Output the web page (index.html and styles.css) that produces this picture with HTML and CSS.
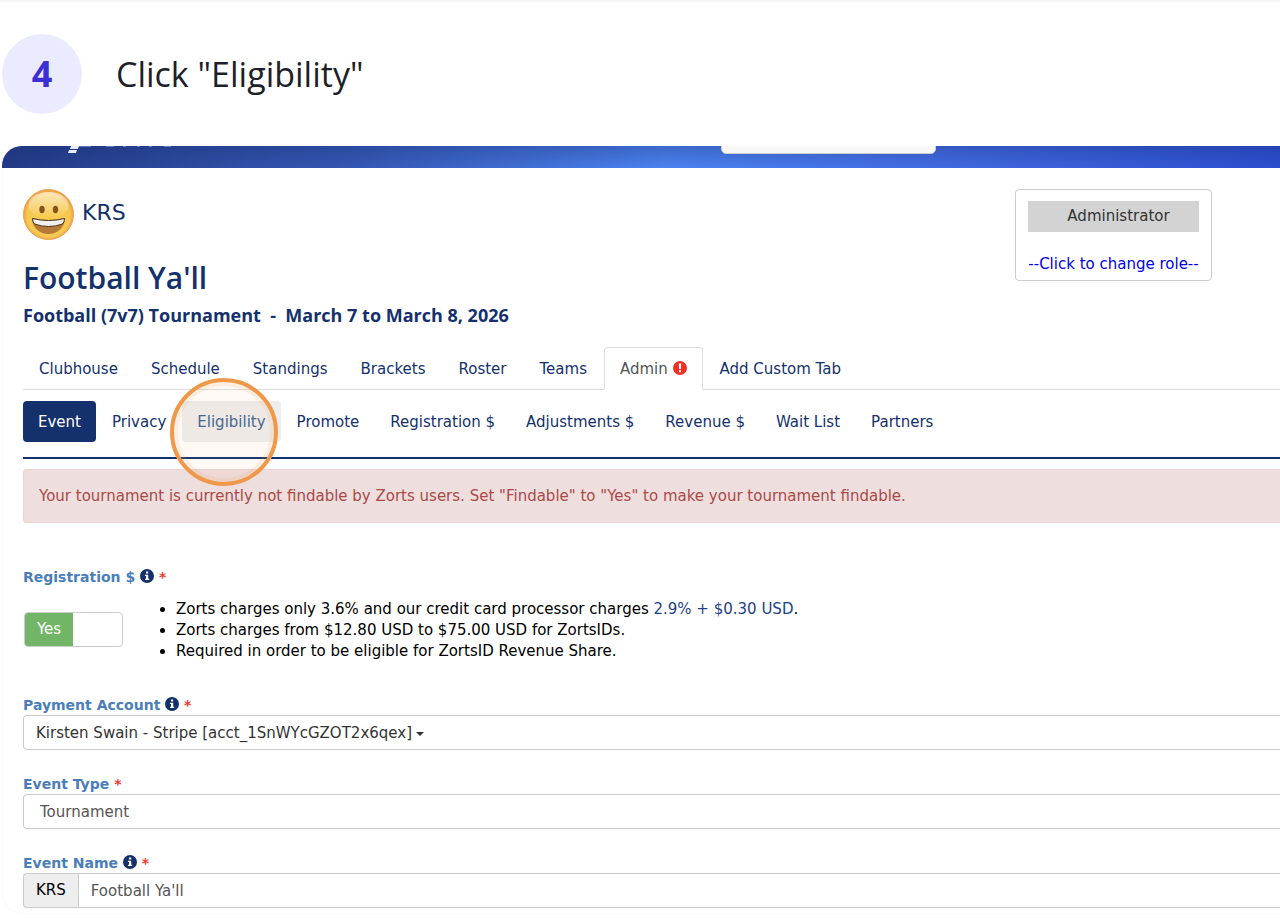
FILE: index.html
```html
<!DOCTYPE html>
<html lang="en">
<head>
    <meta charset="UTF-8">
    <meta name="viewport" content="width=device-width, initial-scale=1.0">
    <title>Click "Eligibility"</title>
    <link rel="stylesheet" href="styles.css">
</head>
<body>
    <!-- Step heading -->
    <header class="step">
        <span class="step-number">4</span>
        <h1 class="step-title">Click "Eligibility"</h1>
    </header>

    <main class="shot">
        <!-- Site bar, scrolled mostly out of view -->
        <div class="site-bar">
            <svg class="logo" width="110" height="8" viewBox="0 0 110 8" aria-hidden="true">
                <path d="M4 0H12L11 3H3ZM2 4H10L9 7H1Z" fill="#e8ecf6"/>
                <path d="M12 0H24M39 0H47M56 0H59M70 0H73M82 0H85M97 0H104" stroke="#a9b4d2" stroke-width="1"/>
            </svg>
            <input class="site-search" type="text" aria-label="Search">
        </div>

        <div class="page">
            <div class="top">
                <div class="club">
                    <svg class="avatar" viewBox="0 0 51 51" aria-hidden="true">
                        <defs>
                            <radialGradient id="face" cx="50%" cy="52%" r="50%">
                                <stop offset="0" stop-color="#f8cb4b"/>
                                <stop offset="0.85" stop-color="#f7c852"/>
                                <stop offset="1" stop-color="#eda044"/>
                            </radialGradient>
                            <linearGradient id="shine" x1="0" y1="0" x2="0" y2="1">
                                <stop offset="0" stop-color="#fff" stop-opacity="0.6"/>
                                <stop offset="1" stop-color="#fff" stop-opacity="0"/>
                            </linearGradient>
                        </defs>
                        <circle cx="25.5" cy="25.5" r="25" fill="url(#face)" stroke="#eda050"/>
                        <ellipse cx="25.5" cy="16" rx="20" ry="13" fill="url(#shine)"/>
                        <ellipse cx="19" cy="20.5" rx="2.7" ry="3.8" fill="#84531d"/>
                        <ellipse cx="32.5" cy="20.5" rx="2.7" ry="3.8" fill="#84531d"/>
                        <path d="M9 29Q25.5 33 42 29C42 39 34 45 25.5 45S9 39 9 29Z" fill="#b57b36"/>
                        <path d="M9.5 29.5Q25.5 33.5 41.5 29.5Q41.5 33 39.5 35Q25.5 40 11.5 35Q9.5 33 9.5 29.5Z" fill="#f0f0ee" stroke="#4f331a"/>
                    </svg>
                    <a class="club-name" href="#">KRS</a>
                </div>
                <div class="role">
                    <div class="role-name">Administrator</div>
                    <a class="role-change" href="#">--Click to change role--</a>
                </div>
            </div>

            <h2 class="event-title">Football Ya'll</h2>
            <h3 class="event-info">Football (7v7) Tournament &nbsp;-&nbsp; March 7 to March 8, 2026</h3>

            <nav class="tabs">
                <a href="#">Clubhouse</a>
                <a href="#">Schedule</a>
                <a href="#">Standings</a>
                <a href="#">Brackets</a>
                <a href="#">Roster</a>
                <a href="#">Teams</a>
                <a class="active" href="#">Admin
                    <svg class="icon" viewBox="0 0 14 14" aria-hidden="true"><circle cx="7" cy="7" r="7" fill="#ee3124"/><path d="M5.8 2.5H8.2L7.9 8H6.1ZM6 9.2H8V11.3H6Z" fill="#fff"/></svg>
                </a>
                <a href="#">Add Custom Tab</a>
            </nav>

            <nav class="pills">
                <a class="active" href="#">Event</a>
                <a href="#">Privacy</a>
                <a class="hover" href="#">Eligibility<span class="click-ring"></span></a>
                <a href="#">Promote</a>
                <a href="#">Registration $</a>
                <a href="#">Adjustments $</a>
                <a href="#">Revenue $</a>
                <a href="#">Wait List</a>
                <a href="#">Partners</a>
            </nav>

            <div class="alert">Your tournament is currently not findable by Zorts users. Set "Findable" to "Yes" to make your tournament findable.</div>

            <form class="event-form">
                <div class="field">
                    <label class="label" for="registration">Registration $
                        <svg class="icon" viewBox="0 0 14 14" aria-hidden="true"><circle cx="7" cy="7" r="7" fill="#14316d"/><path d="M6 2.5H8.2V4.5H6ZM5 5.7H8.2V9.7H9.2V11H5V9.7H6V7H5Z" fill="#fff"/></svg>
                        <span class="required">*</span>
                    </label>
                    <div class="registration">
                        <div class="switch">
                            <input type="checkbox" id="registration" checked>
                            <span class="switch-on">Yes</span>
                        </div>
                        <ul class="fees">
                            <li>Zorts charges only 3.6% and our credit card processor charges <a href="#">2.9% + $0.30 USD</a>.</li>
                            <li>Zorts charges from $12.80 USD to $75.00 USD for ZortsIDs.</li>
                            <li>Required in order to be eligible for ZortsID Revenue Share.</li>
                        </ul>
                    </div>
                </div>

                <div class="field">
                    <label class="label" for="account">Payment Account
                        <svg class="icon" viewBox="0 0 14 14" aria-hidden="true"><circle cx="7" cy="7" r="7" fill="#14316d"/><path d="M6 2.5H8.2V4.5H6ZM5 5.7H8.2V9.7H9.2V11H5V9.7H6V7H5Z" fill="#fff"/></svg>
                        <span class="required">*</span>
                    </label>
                    <button class="control account" id="account" type="button">Kirsten Swain - Stripe [acct_1SnWYcGZOT2x6qex]<span class="caret"></span></button>
                </div>

                <div class="field">
                    <label class="label" for="type">Event Type
                        <span class="required">*</span>
                    </label>
                    <select class="control type" id="type">
                        <option>Tournament</option>
                    </select>
                </div>

                <div class="field">
                    <label class="label" for="name">Event Name
                        <svg class="icon" viewBox="0 0 14 14" aria-hidden="true"><circle cx="7" cy="7" r="7" fill="#14316d"/><path d="M6 2.5H8.2V4.5H6ZM5 5.7H8.2V9.7H9.2V11H5V9.7H6V7H5Z" fill="#fff"/></svg>
                        <span class="required">*</span>
                    </label>
                    <div class="name-group">
                        <span class="addon">KRS</span>
                        <input class="control" id="name" type="text" value="Football Ya'll">
                    </div>
                </div>
            </form>
        </div>
    </main>
</body>
</html>
```
FILE: styles.css
```css
* {
    box-sizing: border-box;
}

body {
    margin: 0;
    border-top: 2px solid #f5f5f6;
    background-color: #fff;
    font-family: "DejaVu Sans", Verdana, sans-serif;
    font-size: 15px;
    line-height: 20px;
    color: #000;
}

a {
    color: #14316d;
    text-decoration: none;
}

/* Step heading */
.step {
    display: flex;
    align-items: center;
    gap: 34px;
    padding: 32px 2px;
}

.step-number {
    width: 80px;
    height: 80px;
    border-radius: 50%;
    background-color: #ebebff;
    color: #3c2fd3;
    font-family: "Open Sans", sans-serif;
    font-size: 36px;
    font-weight: bold;
    line-height: 80px;
    text-align: center;
}

.step-title {
    margin: 0;
    font-family: "Open Sans", sans-serif;
    font-size: 34px;
    font-weight: normal;
    line-height: 40px;
    color: #1e1f28;
}

/* Captured window */
.shot {
    margin-left: 2px;
    border-bottom: 1px solid #fafafa;
    border-radius: 20px 0 0 20px;
    box-shadow: inset 1px 0 #fafafa;
    overflow: hidden;
}

.site-bar {
    position: relative;
    height: 22px;
    background:
        linear-gradient(to top, rgba(20, 45, 110, 0), rgba(20, 45, 110, 0.3)),
        linear-gradient(to right, #243a86 0%, #3558b5 28%, #4c82f0 52%, #4169e1 75%, #2c4ed0 100%);
}

.logo {
    position: absolute;
    left: 65px;
    top: 0;
}

.site-search {
    position: absolute;
    left: 56.25%;
    bottom: 14px;
    width: 215px;
    height: 34px;
    border: 1px solid #ccc;
    border-radius: 5px;
    background-color: #f8f8f8;
}

.page {
    padding: 21px 0 5px 21px;
}

.top {
    display: flex;
    justify-content: space-between;
    align-items: flex-start;
    padding-right: 68px;
}

.club {
    display: flex;
    gap: 8px;
}

.avatar {
    width: 51px;
    height: 51px;
}

.club-name {
    font-size: 22px;
    line-height: 48px;
}

.role {
    width: 197px;
    height: 92px;
    padding: 11px 12px;
    border: 1px solid #ccc;
    border-radius: 4px;
    text-align: center;
    white-space: nowrap;
}

.role-name {
    padding-left: 10px;
    background-color: #d3d3d3;
    color: #333;
    line-height: 31px;
}

.role-change {
    display: block;
    margin-top: 22px;
    color: #00e;
}

.event-title,
.event-info {
    margin: 0;
    color: #14316d;
    font-family: "Open Sans", sans-serif;
}

.event-title {
    margin-top: -21px;
    font-size: 30px;
    font-weight: 600;
    line-height: 36px;
}

.event-info {
    margin-top: 8px;
    font-size: 18px;
    line-height: 22px;
}

/* Main tabs */
.tabs {
    display: flex;
    gap: 1px;
    margin-top: 21px;
    border-bottom: 1px solid #ddd;
}

.tabs a {
    height: 43px;
    margin-bottom: -1px;
    padding: 11px 15px;
    border: 1px solid transparent;
    border-radius: 4px 4px 0 0;
}

.tabs .active {
    border-color: #ddd;
    border-bottom-color: #fff;
    background-color: #fff;
    color: #555;
}

.icon {
    width: 14px;
    height: 14px;
    vertical-align: -1px;
}

/* Admin sections */
.pills {
    display: flex;
    gap: 1px;
    padding: 11px 0 15px;
    border-bottom: 2px solid #14316d;
}

.pills a {
    padding: 11px 15px 10px;
    border-radius: 4px;
}

.pills .active {
    background-color: #14316d;
    color: #fff;
}

.pills .hover {
    position: relative;
    background-color: #eee;
    color: #3d6596;
}

.click-ring {
    position: absolute;
    left: -12px;
    top: -23px;
    width: 108px;
    height: 108px;
    border: 4px solid #f0984a;
    border-radius: 50%;
    background-color: rgba(240, 152, 74, 0.06);
    box-shadow: inset 0 0 0 4px rgba(240, 152, 74, 0.1);
}

.alert {
    margin-top: 10px;
    padding: 16px 15px;
    border: 1px solid #ebd3d6;
    border-right: 0;
    border-radius: 4px 0 0 4px;
    background-color: #efdede;
    color: #a94a48;
}

/* Event form */
.event-form {
    margin-top: 44px;
}

.field {
    margin-bottom: 24px;
}

.label {
    display: block;
    color: #4a7ebb;
    font-size: 14px;
    font-weight: bold;
}

.required {
    color: #f03a2e;
}

.registration {
    display: flex;
}

.switch {
    position: relative;
    width: 99px;
    height: 35px;
    margin: 25px 0 0 1px;
    border: 1px solid #ccc;
    border-radius: 4px;
    overflow: hidden;
}

.switch input {
    position: absolute;
    inset: 0;
    width: 100%;
    height: 100%;
    margin: 0;
    opacity: 0;
}

.switch-on {
    display: block;
    width: 48px;
    background-color: #72b566;
    color: #fff;
    line-height: 33px;
    text-align: center;
}

.fees {
    margin: 12px 0 9px;
    padding-left: 53px;
    line-height: 21px;
}

.fees a {
    color: #1f3f85;
}

.control {
    display: block;
    width: 100%;
    height: 35px;
    padding: 0 12px;
    border: 1px solid #ccc;
    border-right: 0;
    border-radius: 4px 0 0 4px;
    background-color: #fff;
    color: #555;
    font: inherit;
    text-align: left;
}

.account {
    color: #333;
}

.type {
    padding-left: 16px;
    appearance: none;
}

.caret {
    display: inline-block;
    margin-left: 4px;
    border-top: 4px solid #333;
    border-left: 4px solid transparent;
    border-right: 4px solid transparent;
    vertical-align: 2px;
}

.name-group {
    display: flex;
}

.name-group .control {
    border-radius: 0;
}

.addon {
    padding: 0 12px;
    border: 1px solid #ccc;
    border-right: 0;
    border-radius: 4px 0 0 4px;
    background-color: #eee;
    line-height: 33px;
}

.field:last-child {
    margin-bottom: 0;
}
```
